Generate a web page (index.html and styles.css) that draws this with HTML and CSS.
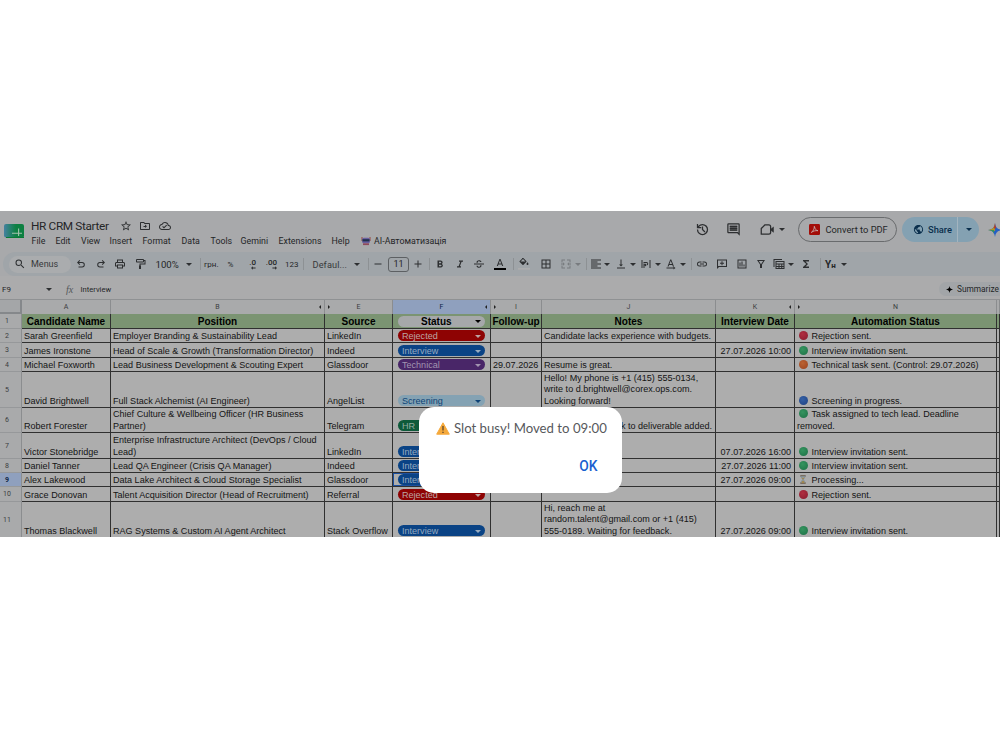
FILE: index.html
```
<!DOCTYPE html>
<html lang="en">
<head>
  <meta charset="UTF-8">
  <meta name="viewport" content="width=device-width, initial-scale=1.0">
  <title>HR CRM Starter</title>
  <link rel="stylesheet" href="styles.css">
</head>
<body>

  <div class="app">
    <header class="header">
      <svg class="logo" viewBox="0 0 20 16">
        <defs><linearGradient id="lg"><stop offset="0" stop-color="#4481a0"/><stop offset=".6" stop-color="#0d8042"/></linearGradient></defs>
        <rect x="0" y="1" width="20" height="13.5" rx="2" fill="url(#lg)"/>
        <path d="M2 14.5h18V12" fill="none" stroke="#087a35"/>
        <path d="M8 10.200h10M14.600 5.500v7.500" stroke="#a4c2ae" stroke-width="1.100"/>
      </svg>
      <div class="titles">
        <div class="doc-title">
          <span class="doc-name">HR CRM Starter</span>
          <svg class="icon" viewBox="0 0 24 24"><path d="M22 9.24l-7.19-.62L12 2 9.19 8.63 2 9.24l5.46 4.73L5.82 21 12 17.27 18.18 21l-1.63-7.03L22 9.24zM12 15.4l-3.76 2.27 1-4.28-3.32-2.88 4.38-.38L12 6.1l1.71 4.04 4.38.38-3.32 2.88 1 4.28L12 15.4z"/></svg>
          <svg class="icon" viewBox="0 0 24 24"><path d="M20 6h-8l-2-2H4c-1.1 0-2 .9-2 2v12c0 1.1.9 2 2 2h16c1.1 0 2-.9 2-2V8c0-1.100-.9-2-2-2zm0 12H4V6h5.170l2 2H20v10zm-8-6v2h-3v-2zm0 4 4-3.500-4-3.500z"/></svg>
          <svg class="icon" viewBox="0 0 24 24"><path d="M19.350 10.040C18.670 6.590 15.640 4 12 4 9.110 4 6.600 5.640 5.350 8.040 2.340 8.360 0 10.910 0 14c0 3.310 2.690 6 6 6h13c2.760 0 5-2.240 5-5 0-2.640-2.050-4.780-4.650-4.960zM19 18H6c-2.210 0-4-1.790-4-4 0-2.050 1.530-3.760 3.560-3.970l1.070-.110.500-.950C8.080 7.140 9.940 6 12 6c2.620 0 4.880 1.860 5.390 4.430l.300 1.500 1.530.110c1.560.100 2.780 1.410 2.780 2.960 0 1.650-1.350 3-3 3zm-9-3.820l-2.090-2.090L6.500 13.500 10 17l6.010-6.010-1.410-1.410z"/></svg>
        </div>
        <nav class="menu">
          <span>File</span><span>Edit</span><span>View</span><span>Insert</span><span>Format</span>
          <span>Data</span><span>Tools</span><span>Gemini</span><span>Extensions</span><span>Help</span>
          <svg class="robot" viewBox="0 0 10 10"><path d="M1 1v4M9 1v4" stroke="#96453f" stroke-width="1"/><rect x="1.200" y="1.800" width="7.600" height="5.500" rx="1.500" fill="#6a5fa0"/><rect x="1.500" y="3.200" width="7" height="2.200" fill="#20304c"/><path d="M2 8.200h6" stroke="#8e4a5b" stroke-width="1.800"/></svg>
          <span class="addon">AI-Автоматизація</span>
        </nav>
      </div>
      <div class="actions">
        <svg class="icon-lg" viewBox="0 0 24 24"><path d="M12 3a9 9 0 0 0-7 3.350V3H3v7h7V8H6.260A7 7 0 1 1 5 12H3a9 9 0 1 0 9-9zm-1 4v5.400l4.200 4.200 1.400-1.400-3.600-3.600V7z"/></svg>
        <svg class="icon-lg" viewBox="0 0 24 24"><path d="M22 4a2 2 0 0 0-2-2H4a2 2 0 0 0-2 2v12c0 1.100.9 2 2 2h14l4 4zm-2 13.200L18.800 16H4V4h16zM6 12h12v2H6zm0-3h12v2H6zm0-3h12v2H6z"/><path d="M6 6h12v8H6z" opacity=".6"/></svg>
        <svg class="icon-lg video" viewBox="0 0 24 24"><path d="M8 4.500h6a3 3 0 0 1 3 3v9a3 3 0 0 1-3 3H2V10.500z" fill="none" stroke="#2d2f31" stroke-width="2" stroke-linejoin="round"/><path d="M17 11l5-4v10l-5-4z"/></svg>
        <i class="caret"></i>
        <button class="pdf">
          <svg viewBox="0 0 12 12"><rect width="12" height="12" rx="1.500" fill="#a30d08"/><path d="M2.500 9.200C4.500 8 6 5 5.800 2.500c1 3.500 2 4.600 4 4.800C7 7 5 7.500 2.500 9.200z" fill="none" stroke="#c9b3b2" stroke-width=".9"/></svg>
          Convert to PDF
        </button>
        <div class="share">
          <svg viewBox="0 0 24 24"><path d="M12 2C6.480 2 2 6.480 2 12s4.480 10 10 10 10-4.480 10-10S17.520 2 12 2zm-1 17.930c-3.950-.490-7-3.850-7-7.930 0-.620.080-1.210.210-1.790L9 15v1c0 1.100.9 2 2 2v1.930zm6.900-2.540c-.260-.810-1-1.390-1.900-1.390h-1v-3c0-.550-.450-1-1-1H8v-2h2c.550 0 1-.450 1-1V7h2c1.100 0 2-.9 2-2v-.410c2.930 1.190 5 4.060 5 7.410 0 2.080-.8 3.970-2.100 5.390z"/></svg>
          <span>Share</span>
          <i class="caret"></i>
        </div>
        <svg class="spark" viewBox="0 0 14 14"><path d="M7 0C7.600 4.500 9.500 6.400 14 7 9.500 7.600 7.600 9.500 7 14 6.400 9.500 4.500 7.600 0 7 4.500 6.400 6.400 4.500 7 0z" fill="#245fc4"/><path d="M7 0C6.400 4.500 4.500 6.400 0 7l7 1z" fill="#b29527"/><path d="M0 7c4.500.6 5.400 2 6 4V7z" fill="#35935a"/><path d="M7 0c.3 2.500.6 3.600 1.300 4.600L7 6 5.600 4.600C6.300 3.600 6.700 2.500 7 0z" fill="#b03a30"/></svg>
      </div>
    </header>

    <div class="toolbar">
      <div class="search"><svg viewBox="0 0 24 24"><path d="M15.500 14h-.790l-.280-.270A6.470 6.470 0 0 0 16 9.500 6.500 6.500 0 1 0 9.500 16c1.610 0 3.090-.590 4.230-1.570l.270.280v.790l5 4.990L20.490 19zm-6 0a4.500 4.500 0 1 1 0-9 4.500 4.500 0 0 1 0 9z"/></svg>Menus</div>
      <svg class="icon" viewBox="0 0 24 24"><path d="M7 19v-2h7.100a3.400 3.400 0 0 0 0-7H7.800l2.600 2.600L9 14 4 9l5-5 1.400 1.400L7.800 8h6.300a5.500 5.500 0 0 1 0 11z"/></svg>
      <svg class="icon" viewBox="0 0 24 24"><path d="M17 19v-2H9.900a3.400 3.400 0 0 1 0-7h6.300l-2.600 2.600L15 14l5-5-5-5-1.400 1.400L16.200 8H9.900a5.500 5.500 0 0 0 0 11z"/></svg>
      <svg class="icon" viewBox="0 0 24 24"><path d="M19 8h-1V3H6v5H5c-1.660 0-3 1.340-3 3v6h4v4h12v-4h4v-6c0-1.660-1.340-3-3-3zM8 5h8v3H8zm8 14H8v-4h8zm4-4h-2v-2H6v2H4v-4c0-.550.450-1 1-1h14c.550 0 1 .450 1 1z"/></svg>
      <svg class="icon" viewBox="0 0 24 24"><path d="M18 2H6a2 2 0 0 0-2 2v3c0 1.100.9 2 2 2h12a2 2 0 0 0 2-2V6h1v5h-10v4h-1v7h4v-7h-1v-2h10V4h-3a2 2 0 0 0-2-2zm0 5H6V4h12z"/></svg>
      <span class="zoom">100%</span>
      <i class="caret"></i>
      <i class="sep"></i>
      <span class="small">грн.</span>
      <span class="small">%</span>
      <span class="dec">.0<svg viewBox="0 0 12 8"><path d="M11 3H4.500V0L0 4l4.500 4V5H11z"/></svg></span>
      <span class="dec">.00<svg viewBox="0 0 12 8"><path d="M1 3h6.500V0L12 4 7.500 8V5H1z"/></svg></span>
      <span class="small">123</span>
      <i class="sep"></i>
      <span class="font">Defaul...</span>
      <i class="caret"></i>
      <i class="sep"></i>
      <svg class="icon" viewBox="0 0 24 24"><path d="M5 11h14v2H5z"/></svg>
      <span class="size">11</span>
      <svg class="icon" viewBox="0 0 24 24"><path d="M19 13h-6v6h-2v-6H5v-2h6V5h2v6h6z"/></svg>
      <i class="sep"></i>
      <svg class="icon" viewBox="0 0 24 24"><path d="M15.600 11.790c.970-.670 1.650-1.770 1.650-2.790 0-2.260-1.750-4-4-4H7v14h7.040c2.090 0 3.710-1.700 3.710-3.790 0-1.520-.860-2.820-2.150-3.420zM10 7.500h3a1.500 1.500 0 0 1 0 3h-3zm3.500 9H10v-3h3.500a1.500 1.500 0 0 1 0 3z"/></svg>
      <svg class="icon" viewBox="0 0 24 24"><path d="M10 5v2.500h2.600l-3.400 9H6V19h8v-2.500h-2.200l3.400-9H18V5z"/></svg>
      <svg class="icon" viewBox="0 0 24 24"><path d="M2 11h20v2H2zM7 9.500C6.500 6.500 9 4.500 12 4.500c2.600 0 4.500 1.200 5 3.500h-2.500c-.3-1-1.200-1.500-2.500-1.500-1.800 0-3 1.200-2.300 3zM17 14.500c.5 3-2 5-5 5-2.600 0-4.800-1.300-5-4h2.500c.1 1.300 1.200 2 2.500 2 1.800 0 2.900-1.200 2.300-3z"/></svg>
      <svg class="icon" viewBox="0 0 24 24"><path d="M11 2 5.500 16h2.300l1.100-3h6.200l1.100 3h2.300L13 2zm-1.400 9L12 4.700 14.400 11z"/><path d="M0 20h24v4H0z" fill="#000"/></svg>
      <i class="sep"></i>
      <svg class="icon" viewBox="0 0 24 24"><g transform="translate(0 -3)"><path d="M16.560 8.940 7.620 0 6.210 1.410l2.380 2.380-5.150 5.150a1.500 1.500 0 0 0 0 2.120l5.500 5.500c.6.600 1.540.600 2.120 0l5.500-5.500c.590-.580.590-1.530 0-2.120zM5.210 10 10 5.210 14.790 10zM19 11.500s-2 2.170-2 3.500a2 2 0 0 0 4 0c0-1.330-2-3.500-2-3.500z"/></g><path d="M0 20h24v3.500H0z" fill="#acadae"/></svg>
      <svg class="icon" viewBox="0 0 24 24"><path d="M3 3v18h18V3zm8 16H5v-6h6zm0-8H5V5h6zm8 8h-6v-6h6zm0-8h-6V5h6z"/></svg>
      <svg class="icon off" viewBox="0 0 24 24"><path d="M3 3h7v2H5v4H3zm11 0h7v6h-2V5h-5zM3 15h2v4h5v2H3zm16 0h2v6h-7v-2h5zM2 11h4V8.500L9.500 12 6 15.500V13H2zm20 0h-4V8.500L14.500 12l3.500 3.500V13h4z"/></svg>
      <i class="caret off"></i>
      <i class="sep"></i>
      <svg class="icon" viewBox="0 0 24 24"><path d="M15 15H2v2h13zm0-8H2v2h13zM2 13h20v-2H2zm0 8h20v-2H2zM2 3v2h20V3z"/></svg>
      <i class="caret"></i>
      <svg class="icon" viewBox="0 0 24 24"><path d="M16 13h-3V3h-2v10H8l4 4zM4 19v2h16v-2z"/></svg>
      <i class="caret"></i>
      <svg class="icon" viewBox="0 0 24 24"><path d="M3 4h2v16H3zM19 4h2v16h-2zM7 8h6a3.500 3.500 0 0 1 0 7v-2a1.500 1.500 0 0 0 0-3H7zm5 3v6l-4-3zM7 11h2v9H7z"/></svg>
      <i class="caret"></i>
      <svg class="icon" viewBox="0 0 24 24"><path d="M10.500 3 5 17h2.200l1.100-3h6.400l1.100 3H18L12.500 3zM9 12l2.500-6.500L14 12zM3 19h14v-2l4 3-4 3v-2H3z"/></svg>
      <i class="caret"></i>
      <i class="sep"></i>
      <svg class="icon" viewBox="0 0 24 24"><path d="M3.900 12A3.100 3.100 0 0 1 7 8.900h4V7H7a5 5 0 0 0 0 10h4v-1.900H7A3.100 3.100 0 0 1 3.900 12zM8 13h8v-2H8zm9-6h-4v1.900h4a3.100 3.100 0 0 1 0 6.200h-4V17h4a5 5 0 0 0 0-10z"/></svg>
      <svg class="icon" viewBox="0 0 24 24"><path d="M2 3v19l4-4h16V3zm18 13H4V5h16zM11 6.500h2v3h3v2h-3v3h-2v-3H8v-2h3z"/></svg>
      <svg class="icon" viewBox="0 0 24 24"><path d="M3 3v18h18V3zm16 16H5V5h14zM7 9h2v8H7zm4-2h2v10h-2zm4 6h2v4h-2z"/></svg>
      <svg class="icon" viewBox="0 0 24 24"><path d="M4 4l6 9v7h4v-7l6-9zm3.700 2h8.600L12 12.300z"/></svg>
      <svg class="icon" viewBox="0 0 24 24"><path d="M1 2h17v2H3v14H1zM5 6v16h18V6zm2 2h14v3H7zm0 5h4v3H7zm6 0h3.500v3H13zm5.500 0H21v3h-2.500zM7 18h4v2H7zm6 0h3.500v2H13zm5.500 0H21v2h-2.500z"/></svg>
      <i class="caret"></i>
      <svg class="icon" viewBox="0 0 24 24"><path d="M18 4H6v2l6.500 6L6 18v2h12v-3h-7l5-5-5-5h7z"/></svg>
      <i class="sep"></i>
      <span class="input-lang">Y<small>н</small></span>
      <i class="caret"></i>
    </div>

    <div class="formula">
      <span class="cell-ref">F9</span>
      <i class="caret"></i>
      <span class="fx">fx</span>
      <span class="value">Interview</span>
      <span class="summarize"><svg viewBox="0 0 14 14"><path d="M7 0C7.800 4.500 9.500 6.200 14 7 9.500 7.800 7.800 9.500 7 14 6.200 9.500 4.500 7.800 0 7 4.500 6.200 6.200 4.500 7 0z"/></svg>Summarize this</span>
    </div>

    <div class="sheet">
      <div class="row letters">
        <div class="corner"></div>
        <div>A</div>
        <div>B<i class="hid left"></i></div>
        <div><i class="hid right"></i>E</div>
        <div class="active">F<i class="hid left"></i></div>
        <div><i class="hid right"></i>I</div>
        <div>J</div>
        <div>K<i class="hid left"></i></div>
        <div><i class="hid right"></i>N</div>
        <div></div>
      </div>
      <div class="row head">
        <div class="num">1</div>
        <div>Candidate Name</div><div>Position</div><div>Source</div>
        <div class="pick"><span class="chip plain">Status</span></div>
        <div>Follow-up</div><div>Notes</div><div>Interview Date</div><div>Automation Status</div><div></div>
      </div>
      <div class="row h14">
        <div class="num">2</div>
        <div>Sarah Greenfield</div><div>Employer Branding &amp; Sustainability Lead</div><div>LinkedIn</div>
        <div class="pick"><span class="chip rejected">Rejected</span></div>
        <div></div><div>Candidate lacks experience with budgets.</div><div></div>
        <div><p><i class="dot red"></i>Rejection sent.</p></div><div></div>
      </div>
      <div class="row h15">
        <div class="num">3</div>
        <div>James Ironstone</div><div>Head of Scale &amp; Growth (Transformation Director)</div><div>Indeed</div>
        <div class="pick"><span class="chip interview">Interview</span></div>
        <div></div><div></div><div class="date">27.07.2026 10:00</div>
        <div><p><i class="dot green"></i>Interview invitation sent.</p></div><div></div>
      </div>
      <div class="row h14">
        <div class="num">4</div>
        <div>Michael Foxworth</div><div>Lead Business Development &amp; Scouting Expert</div><div>Glassdoor</div>
        <div class="pick"><span class="chip technical">Technical</span></div>
        <div class="date">29.07.2026</div><div>Resume is great.</div><div></div>
        <div><p><i class="dot orange"></i>Technical task sent. (Control: 29.07.2026)</p></div><div></div>
      </div>
      <div class="row h36">
        <div class="num">5</div>
        <div>David Brightwell</div><div>Full Stack Alchemist (AI Engineer)</div><div>AngelList</div>
        <div class="pick"><span class="chip screening">Screening</span></div>
        <div></div><div>Hello! My phone is +1 (415) 555-0134,<br>write to d.brightwell@corex.ops.com.<br>Looking forward!</div><div></div>
        <div><p><i class="dot blue"></i>Screening in progress.</p></div><div></div>
      </div>
      <div class="row h25">
        <div class="num">6</div>
        <div>Robert Forester</div><div>Chief Culture &amp; Wellbeing Officer (HR Business<br>Partner)</div><div>Telegram</div>
        <div class="pick"><span class="chip hr">HR</span></div>
        <div></div><div class="date">Link to deliverable added.</div><div></div>
        <div><p><i class="dot green"></i>Task assigned to tech lead. Deadline<br>removed.</p></div><div></div>
      </div>
      <div class="row h26">
        <div class="num">7</div>
        <div>Victor Stonebridge</div><div>Enterprise Infrastructure Architect (DevOps / Cloud<br>Lead)</div><div>LinkedIn</div>
        <div class="pick"><span class="chip interview">Interview</span></div>
        <div></div><div></div><div class="date">07.07.2026 16:00</div>
        <div><p><i class="dot green"></i>Interview invitation sent.</p></div><div></div>
      </div>
      <div class="row h14">
        <div class="num">8</div>
        <div>Daniel Tanner</div><div>Lead QA Engineer (Crisis QA Manager)</div><div>Indeed</div>
        <div class="pick"><span class="chip interview">Interview</span></div>
        <div></div><div></div><div class="date">27.07.2026 11:00</div>
        <div><p><i class="dot green"></i>Interview invitation sent.</p></div><div></div>
      </div>
      <div class="row h14">
        <div class="num active">9</div>
        <div>Alex Lakewood</div><div>Data Lake Architect &amp; Cloud Storage Specialist</div><div>Glassdoor</div>
        <div class="pick selected"><span class="chip interview">Interview</span></div>
        <div></div><div></div><div class="date">27.07.2026 09:00</div>
        <div><p><svg class="hourglass" viewBox="0 0 8 10"><path d="M1 1h6M1 9h6" stroke="#6b5846" stroke-width="1.200"/><path d="M1.500 1.500h5L4.500 5l2 3.500h-5l2-3.500z" fill="#8fa0a8" stroke="#727c80" stroke-width=".5"/><path d="M2.500 3h3L4 5zM4 6l2 2.500H2z" fill="#a8823a"/></svg>Processing...</p></div><div></div>
      </div>
      <div class="row h15">
        <div class="num">10</div>
        <div>Grace Donovan</div><div>Talent Acquisition Director (Head of Recruitment)</div><div>Referral</div>
        <div class="pick"><span class="chip rejected">Rejected</span></div>
        <div></div><div></div><div></div>
        <div><p><i class="dot red"></i>Rejection sent.</p></div><div></div>
      </div>
      <div class="row h36">
        <div class="num">11</div>
        <div>Thomas Blackwell</div><div>RAG Systems &amp; Custom AI Agent Architect</div><div>Stack Overflow</div>
        <div class="pick"><span class="chip interview">Interview</span></div>
        <div></div><div>Hi, reach me at<br>random.talent@gmail.com or +1 (415)<br>555-0189. Waiting for feedback.</div><div class="date">27.07.2026 09:00</div>
        <div><p><i class="dot green"></i>Interview invitation sent.</p></div><div></div>
      </div>
    </div>

    <div class="dialog">
      <div class="message">
        <svg viewBox="0 0 14 13"><path d="M7 .8 13.300 12.200H.7z" fill="#f5a93b" stroke="#f5a93b" stroke-linejoin="round"/><path d="M7 4v4.500M7 9.700v1.300" stroke="#5a4630" stroke-width="1.300"/></svg>
        <span>Slot busy! Moved to 09:00</span>
      </div>
      <button class="ok">OK</button>
    </div>
  </div>

</body>
</html>
```

FILE: styles.css
```
* {
  box-sizing: border-box;
}

body {
  margin: 0;
  padding-top: 211px;
  height: 750px;
  overflow: hidden;
  background: #ffffff;
  font-family: Roboto, "Liberation Sans", sans-serif;
  color: #242527;
}

.app {
  position: relative;
  width: 1000px;
  height: 326px;
  overflow: hidden;
  background: #a8a9ab;
}

svg {
  display: block;
  fill: #2d2f31;
  flex: none;
}

p {
  margin: 0;
}

button {
  font-family: inherit;
  margin: 0;
}

.icon {
  width: 12px;
  height: 12px;
}

.icon-lg {
  width: 15px;
  height: 15px;
}

.caret {
  flex: none;
  width: 0;
  height: 0;
  border: 3px solid transparent;
  border-top: 3px solid #2d2f31;
  border-bottom: 0;
}

.off {
  opacity: 0.35;
}

/* header */
.header {
  display: flex;
  height: 41px;
}

.logo {
  width: 20px;
  height: 16px;
  margin: 12px 7px 0 4px;
}

.titles {
  flex: none;
  width: 500px;
  padding-top: 6px;
}

.doc-title {
  display: flex;
  align-items: center;
  gap: 7.5px;
  height: 17px;
}

.doc-name {
  width: 81px;
  font-size: 11.8px;
  letter-spacing: -0.35px;
  white-space: nowrap;
}

.menu {
  display: grid;
  grid-template-columns: 24px 25.5px 28.5px 33px 39px 29px 30px 38px 53px 29.5px 13px 80px;
  align-items: center;
  height: 13px;
  padding-left: 0.6px;
  font-size: 8.8px;
  white-space: nowrap;
}

.robot {
  width: 10px;
  height: 10px;
}

.actions {
  display: grid;
  flex: none;
  grid-template-columns: 31px 34px 19px 19px 104px 86px 14px;
  align-items: center;
  height: 37px;
  margin-left: 164px;
}

.pdf {
  display: flex;
  align-items: center;
  gap: 6px;
  width: 99px;
  height: 25px;
  padding: 0 0 0 9.5px;
  border: 1px solid #696b6d;
  border-radius: 13px;
  background: none;
  color: #242628;
  font-size: 9.3px;
  white-space: nowrap;
}

.pdf svg {
  width: 11px;
  height: 11px;
}

.share {
  display: flex;
  align-items: center;
  width: 77px;
  height: 25px;
  padding-left: 11px;
  border-radius: 13px;
  background: linear-gradient(90deg, #84a1b2 55px, #a3b4bf 55px, #a3b4bf 56px, #84a1b2 56px);
  color: #0a2f4d;
  font-size: 9.3px;
  font-weight: 500;
}

.share svg {
  width: 11px;
  height: 11px;
  margin-right: 4px;
  fill: #0a2f4d;
}

.share span {
  width: 38px;
}

.share .caret {
  border-top-color: #0a2f4d;
}

.spark {
  width: 14px;
  height: 14px;
}

/* toolbar */
.toolbar {
  display: grid;
  grid-template-columns:
    66px 19.5px 19.5px 20px 21.5px 30px 14px 4.5px 23.5px 16.5px
    21px 20px 18px 9.5px 41px 14.5px 4px 16px 24px 16.5px
    5.5px 19.5px 19.5px 20.5px 19px 5.5px 21.5px 20px 15.5px 10.5px
    4.5px 14px 10.5px 15px 10.5px 15px 10px 14.5px 11px 5.5px
    19.5px 20px 19.5px 18px 14.5px 12.5px 19.5px 5.5px 16px 10px;
  align-items: center;
  width: 1010px;
  height: 24px;
  margin-left: 3px;
  padding-left: 6px;
  border-radius: 12px;
  background: #a0a5a9;
  font-size: 9px;
  white-space: nowrap;
}

.search {
  display: flex;
  align-items: center;
  gap: 5px;
  width: 62px;
  height: 17px;
  padding-left: 5px;
  border-radius: 9px;
  background: #aaacae;
  color: #37393b;
  font-size: 9px;
}

.search svg {
  width: 12px;
  height: 12px;
}

.sep {
  width: 1px;
  height: 12px;
  background: #8d9194;
}

.zoom {
  font-size: 9.6px;
}

.small {
  font-size: 8px;
}

.dec {
  display: flex;
  flex-direction: column;
  align-items: flex-end;
  width: 12px;
  font-size: 8px;
  font-weight: 500;
  line-height: 8px;
}

.dec svg {
  width: 5px;
  height: 4px;
  margin-top: -1px;
}

.font {
  color: #37393b;
  font-size: 9.2px;
  letter-spacing: 0.1px;
}

.size {
  width: 21px;
  height: 15px;
  border: 1px solid #5d6063;
  border-radius: 3px;
  line-height: 13px;
  text-align: center;
}

.input-lang {
  font-size: 10px;
  font-weight: 700;
}

.input-lang small {
  font-size: 8px;
}

/* formula bar */
.formula {
  display: grid;
  grid-template-columns: 44px 20px 14.5px 858.5px 90px;
  align-items: center;
  height: 23px;
  padding: 3px 0 0 2px;
  background: #ababac;
  font-size: 8px;
  white-space: nowrap;
}

.value {
  font-size: 7.6px;
}

.fx {
  font: italic 10px "Liberation Serif", serif;
  color: #54575a;
}

.summarize {
  display: flex;
  align-items: center;
  gap: 4px;
  height: 14px;
  padding-left: 7px;
  border-radius: 7px;
  background: #a2a5a8;
  font-size: 8.3px;
}

.summarize svg {
  width: 7px;
  height: 7px;
  fill: #000;
}

/* sheet */
.row {
  display: grid;
  grid-template-columns: 22px 89px 214px 68px 98px 51px 174px 79px 202px 3px;
  font: 9.06px/11.3px "Liberation Sans", Arial, sans-serif;
  color: #141414;
}

.row > div {
  display: flex;
  flex-direction: column;
  justify-content: flex-end;
  min-width: 0;
  overflow: hidden;
  padding: 0 0 0 2px;
  border-right: 1px solid #303030;
  border-bottom: 1px solid #303030;
  background: #adadad;
  white-space: nowrap;
}

.h14 { height: 14px; }
.h15 { height: 15px; }
.h25 { height: 25px; }
.h26 { height: 26px; }
.h36 { height: 36px; }

.row.letters {
  height: 15px;
  border-top: 1px solid #8f9193;
  font: 7px/14px Roboto, sans-serif;
}

.row.letters > div {
  position: relative;
  display: block;
  padding: 0;
  border-right-color: #8b8d8f;
  border-bottom: 0;
  background: #a9aaab;
  color: #3b3d3f;
  text-align: center;
}

.row.letters > .corner {
  border-right: 2px solid #85888b;
  border-bottom: 2px solid #85888b;
  background: #a4a6a8;
}

.row.letters > .active {
  background: #8fa0be;
  color: #0c2344;
}

.hid {
  position: absolute;
  top: 5px;
  width: 0;
  height: 0;
  border: 2px solid transparent;
}

.hid.left {
  right: 3px;
  border-right: 2px solid #222;
  border-left: 0;
}

.hid.right {
  left: 3px;
  border-left: 2px solid #222;
  border-right: 0;
}

.row > .num {
  justify-content: center;
  padding: 0 7px 0 0;
  border-right-color: #8b8d8f;
  border-bottom-color: #96989a;
  background: #a9aaab;
  color: #3b3d3f;
  font: 7px/10px Roboto, sans-serif;
  text-align: center;
}

.row > .num.active {
  background: #8fa0be;
  color: #0c2344;
  font-weight: 700;
}

.head {
  height: 15px;
}

.head > div:not(.num) {
  justify-content: center;
  padding: 1px 0 0 0;
  background: #7b9472;
  color: #000;
  font-size: 10px;
  font-weight: 700;
  text-align: center;
}

.row > .date {
  padding-right: 3px;
  text-align: right;
}

.row > .pick {
  padding: 0 5px 1px 5px;
}

.row > .selected {
  box-shadow: inset 0 0 0 1px #1c4f9e;
}

.chip {
  display: flex;
  align-items: center;
  justify-content: space-between;
  flex: none;
  height: 11px;
  padding: 1.6px 4px 0;
  border-radius: 6px;
}

.chip::after {
  content: "";
  border: 3px solid transparent;
  border-top: 3px solid currentColor;
  border-bottom: 0;
}

.head .chip {
  margin: 0 5px;
  padding: 0 4px 0 23px;
}

.plain { background: #a6a8aa; }
.rejected { background: #8e0303; color: #bda5a4; }
.interview { background: #0a4385; color: #97abc0; }
.technical { background: #492668; color: #a294b0; }
.screening { background: #84a2b3; color: #0d4276; }
.hr { background: #0e5a3a; color: #93aca0; }

.dot {
  display: inline-block;
  width: 9px;
  height: 9px;
  margin: 0 4px 0 1.5px;
  border-radius: 50%;
  vertical-align: -1px;
}

.red { background: radial-gradient(circle at 40% 35%, #b02e40, #861c2e); }
.green { background: radial-gradient(circle at 40% 35%, #35945f, #1d7046); }
.orange { background: radial-gradient(circle at 40% 35%, #bb6232, #99421e); }
.blue { background: radial-gradient(circle at 40% 35%, #3460a5, #1e4080); }

.hourglass {
  display: inline-block;
  width: 8px;
  height: 9px;
  margin: 0 4.5px 0 2px;
  vertical-align: -1px;
}

/* alert on top of the sheet */
.dialog {
  position: absolute;
  left: 419px;
  top: 196px;
  width: 203px;
  height: 86px;
  padding: 11px 15px 0 17px;
  border-radius: 15px;
  background: #fff;
}

.message {
  display: flex;
  align-items: center;
  gap: 4px;
  height: 20px;
  color: #57595c;
  font: 13.2px Lato, sans-serif;
  white-space: nowrap;
}

.message svg {
  width: 14px;
  height: 13px;
}

.ok {
  display: block;
  margin: 18px 9.5px 0 auto;
  padding: 0;
  border: 0;
  background: none;
  color: #1a5fcf;
  font: 500 13.8px/20px Roboto, sans-serif;
}
```
